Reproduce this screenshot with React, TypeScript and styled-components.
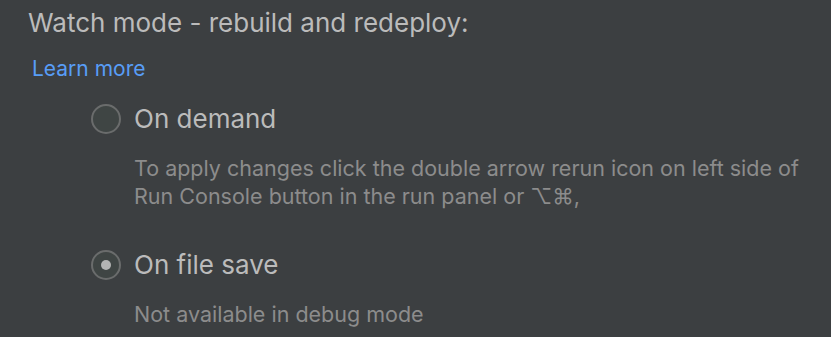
import React from 'react';
import styled, { createGlobalStyle } from 'styled-components';

const GlobalStyle = createGlobalStyle`
  html, body {
    margin: 0;
    padding: 0;
    background: #3c3f41;
  }
  body {
    font-family: Inter, "Noto Sans", sans-serif;
    -webkit-font-smoothing: antialiased;
  }
`;

const Panel = styled.div`
  width: 831px;
  height: 337px;
  box-sizing: border-box;
  background: #3c3f41;
  padding: 8px 0 0 28px;
  overflow: hidden;
`;

const Title = styled.div`
  color: #bbbbbb;
  font-size: 26px;
  line-height: 30px;
`;

const Link = styled.a`
  display: inline-block;
  margin: 18px 0 0 4px;
  color: #589df6;
  font-size: 21px;
  line-height: 26px;
  text-decoration: none;
  cursor: pointer;
`;

const Options = styled.div`
  display: flex;
  flex-direction: column;
  gap: 40px;
  padding-left: 63px;
  margin-top: 22px;
`;

const Option = styled.div`
  display: flex;
  flex-direction: column;
  gap: 20px;
`;

const Row = styled.label`
  display: flex;
  align-items: center;
  gap: 13px;
  height: 30px;
  cursor: pointer;
`;

const Radio = styled.span<{ $checked?: boolean }>`
  width: 30px;
  height: 30px;
  box-sizing: border-box;
  border-radius: 50%;
  border: 2px solid #6a6c6c;
  background: #3f4544;
  display: flex;
  align-items: center;
  justify-content: center;
  flex-shrink: 0;

  &::after {
    content: '';
    display: ${p => (p.$checked ? 'block' : 'none')};
    width: 10px;
    height: 10px;
    border-radius: 50%;
    background: #b4b4b4;
  }
`;

const OptionLabel = styled.span`
  color: #bbbbbb;
  font-size: 26px;
  line-height: 30px;
`;

const Hint = styled.div`
  color: #8c8c8c;
  font-size: 21.5px;
  line-height: 28px;
  padding-left: 43px;
  white-space: nowrap;
`;

const App: React.FC = () => {
  return (
    <>
      <GlobalStyle />
      <Panel>
        <Title>Watch mode - rebuild and redeploy:</Title>
        <Link>Learn more</Link>
        <Options>
          <Option>
            <Row>
              <Radio />
              <OptionLabel>On demand</OptionLabel>
            </Row>
            <Hint>
              To apply changes click the double arrow rerun icon on left side of
              <br />
              Run Console button in the run panel or ⌥⌘,
            </Hint>
          </Option>
          <Option>
            <Row>
              <Radio $checked />
              <OptionLabel>On file save</OptionLabel>
            </Row>
            <Hint>Not available in debug mode</Hint>
          </Option>
        </Options>
      </Panel>
    </>
  );
};

export default App;
